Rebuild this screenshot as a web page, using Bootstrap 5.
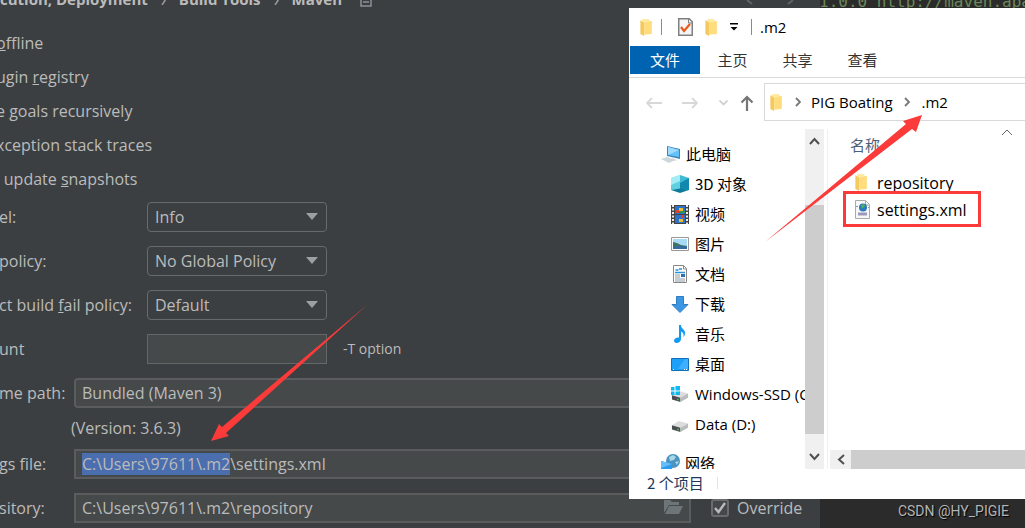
<!DOCTYPE html>
<html lang="zh-CN">
<head>
<meta charset="utf-8">
<meta name="viewport" content="width=device-width, initial-scale=1">
<title>Maven settings</title>
<link href="https://cdn.jsdelivr.net/npm/bootstrap@5.3.0/dist/css/bootstrap.min.css" rel="stylesheet">
<style>
body{background:#3c3f41;color:#bbb;font:16px/20px "Open Sans","Noto Sans CJK SC",sans-serif;overflow:hidden}
.ide{min-height:100vh}
.prefs{width:80%;flex:none}
.crumbs{height:26px;font-weight:700;font-size:15px}
.crumbs ol{margin-top:-11px;height:20px}
.crumbs svg{margin:0 13px}
.crumbs .reset-ico{margin:0 0 0 18px}
.crumbs .hist-ico{margin:0 26px 0 auto}
.opt{line-height:34px;text-indent:-4px}
.opt.cut{text-indent:-8px}
.fields{padding-top:6px}
.line{height:30px;margin-bottom:14px}
.cap-a,.cap-b{width:147px;text-indent:-1px;flex:none;white-space:nowrap}
.cap-b{width:74px}
.box,.box:focus{height:30px;background-color:#45494a;border:2px solid #5a5c5e;border-radius:0;color:#bbb;font-size:16px;line-height:20px;padding:0 6px;box-shadow:none}
.box.thin{border:1px solid #646668;width:180px}
.pick,.pick:focus{height:30px;width:180px;background-color:#3c3f41;border:1px solid #686a6c;border-radius:4px;color:#bbb;font-size:16px;line-height:20px;padding:0 30px 0 7px;box-shadow:none;
background-image:url("data:image/svg+xml,%3Csvg xmlns='http://www.w3.org/2000/svg' viewBox='0 0 12 8'%3E%3Cpath fill='%239da0a3' d='M0 0h12L6 7z'/%3E%3C/svg%3E");background-size:12px 8px;background-position:right 8px center}
.box::selection{background:#4b6eaf;color:#bbb}
.ver{height:41px;line-height:40px;padding-left:71px}
.side{width:129px;flex:none}
.open-ico{right:8px;top:6px}
.tick,.tick:checked{width:18px;height:18px;margin:0;border:2px solid #6b6b6b;border-radius:3px;background-color:#43494a;
background-size:16px 16px;background-image:url("data:image/svg+xml,%3Csvg xmlns='http://www.w3.org/2000/svg' viewBox='0 0 16 16'%3E%3Cpath fill='none' stroke='%23bbb' stroke-width='2.4' d='M3 8l3.5 4L13 3'/%3E%3C/svg%3E")}
.editor{background:#2b2b2b;overflow:hidden;min-width:0}
.code{margin:-9px 0 0 -1px;font:16px/22px "DejaVu Sans Mono",monospace;color:#6a8759}
.mark-text{font:14px/18px Roboto,sans-serif;color:#b4b4b4;padding:0 16px 8px 0;text-shadow:1px 1px 1px #000}
.explorer{left:629px;right:0;top:8px;background:#fff;color:#000;font-size:15px;overflow:hidden;font-family:"Open Sans","Noto Sans CJK SC",sans-serif}
.zh{font-family:"Noto Sans CJK SC",sans-serif}
.title{height:38px;padding-left:11px}
.title .doc{margin-right:12px}
.vline{width:1px;height:16px;background:#8a8a8a}
.tabs{height:32px;border-bottom:1px solid #dadada;margin-bottom:5px;padding-left:1px}
.tabs button{height:28px;border:0;background:none;color:#333;padding:0;width:65px;line-height:28px}
.tabs .on{width:70px;background:#0063b1;color:#fff}
.addr{height:46px}
.addr .hist{width:135px;height:38px;padding:2px 10px 0 17px;flex:none}
.addr button,.bar button{border:0;background:none;padding:0;line-height:0}
.path{height:38px;border:1px solid #d9d9d9;border-right:0;padding-left:5px}
.path a{color:#000}
.path .sep-a{margin:0 10px 0 12px}
.path .sep-b{margin:0 9px 0 8px}
.panes{height:340px}
.tree{width:176px;flex:none;overflow:hidden;padding-top:10px}
.tree li{height:30px;padding-left:42px;gap:6px;white-space:nowrap}
.tree .root{padding-left:32px;gap:5px}
.tree .net{margin-top:9px}
.tree svg{flex:none}
.bar{background:#f0f0f0}
.vbar{width:19px;padding:3px 0;flex:none}
.vbar .thumb{height:229px;background:#cdcdcd;margin-top:55px}
.vbar button{height:18px}
.list{border-left:1px solid #f0f0f0;margin-left:3px;min-width:0}
.head{height:40px;padding:6px 0 0 22px;color:#4c607a}
.head svg{margin:-6px 8px 0 0}
.files{font-size:16px}
.files li{height:27px;padding-left:27px;gap:7px}
.hbar{height:19px;margin-left:2px}
.hbar .thumb{background:#cdcdcd}
.hbar button{width:21px}
.status{height:30px;padding:0 0 3px 18px;color:#1e395b}
.status span{margin-left:13px;width:1px;height:12px;background:#e4e4e4}
.notes{left:0;top:0;pointer-events:none}
</style>
</head>
<body>
<svg width="0" height="0" class="position-absolute" aria-hidden="true"><defs>
<symbol id="folder" viewBox="0 0 13 18"><path fill="#ffe9a3" d="M2 0h7l1 2h2v14l-8 1-2-1z"/><path fill="#ffdc7c" d="M4 4l8-2v14H5z"/><path fill="#f4c95e" d="M0 1l4 3v14l-4-2z"/></symbol>
<symbol id="disk" viewBox="0 0 19 13"><path fill="#dcdcdc" d="M0 5l8-5 11 3-9 5z"/><path fill="#4a4d50" d="M0 5l10 3v5L0 10z"/><path fill="#b9bbbd" d="M10 8l9-5v5l-9 5z"/><path fill="#39c84d" d="M6 9l2 .6v1.6L6 10.600z"/></symbol>
</defs></svg>
<div class="ide d-flex position-relative">
  <main class="prefs">
    <nav class="crumbs d-flex" aria-label="breadcrumb">
      <ol class="list-unstyled d-flex align-items-center mb-0">
        <li>cution, Deployment</li>
        <li><svg width="5" height="9" viewBox="0 0 5 9"><path d="M1 0l3 4.500L1 9" fill="none" stroke="#9a9a9a" stroke-width="1.500"/></svg>Build Tools</li>
        <li><svg width="5" height="9" viewBox="0 0 5 9"><path d="M1 0l3 4.500L1 9" fill="none" stroke="#9a9a9a" stroke-width="1.500"/></svg>Maven</li>
        <li><svg class="reset-ico" width="12" height="12" viewBox="0 0 12 12"><path d="M1 0v11h10V0M3 7h6M3 4h6" fill="none" stroke="#8a9299" stroke-width="1.500"/></svg></li>
      </ol>
      <svg class="hist-ico" width="48" height="6" viewBox="0 0 48 6"><path d="M1 0l5 4M47 0l-5 4" fill="none" stroke="#606365" stroke-width="2"/></svg>
    </nav>
    <div class="opt"><u>o</u>ffline</div>
    <div class="opt">ugin <u>r</u>egistry</div>
    <div class="opt">e <u>g</u>oals recursively</div>
    <div class="opt">xception stack traces</div>
    <div class="opt cut">s update <u>s</u>napshots</div>
    <form class="fields">
      <div class="line d-flex align-items-center"><label class="cap-a" for="lvl">el:</label><select id="lvl" class="form-select pick"><option>Info</option></select></div>
      <div class="line d-flex align-items-center"><label class="cap-a" for="chk">policy:</label><select id="chk" class="form-select pick"><option>No Global Policy</option></select></div>
      <div class="line d-flex align-items-center"><label class="cap-a" for="fail">ct build <u>f</u>ail policy:</label><select id="fail" class="form-select pick"><option>Default</option></select></div>
      <div class="line d-flex align-items-center"><label class="cap-a" for="thr">unt</label><input id="thr" type="text" class="form-control box thin"><small class="ms-3">-T option</small></div>
      <div class="line mb-0 d-flex align-items-center"><label class="cap-b" for="home">me path:</label><input id="home" type="text" class="form-control box rounded-1" value="Bundled (Maven 3)"><span class="side"></span></div>
      <div class="ver">(Version: 3.6.3)</div>
      <div class="line d-flex align-items-center"><label class="cap-b" for="cfg">gs file:</label><input id="cfg" type="text" class="form-control box" value="C:\Users\97611\.m2\settings.xml"><span class="side"></span></div>
      <div class="line d-flex align-items-center mb-0"><label class="cap-b" for="repo">sitory:</label>
        <div class="flex-grow-1 position-relative"><input id="repo" type="text" class="form-control box" value="C:\Users\97611\.m2\repository"><svg class="open-ico position-absolute" width="19" height="16" viewBox="0 0 19 16"><path fill="#6e7579" d="M0 14V1h6l2 2h7v3H5zM1 15l4-8h14l-4 8z"/></svg></div>
        <div class="side d-flex align-items-center gap-2 ps-3"><input id="ovr" type="checkbox" class="form-check-input tick ms-1" checked><label for="ovr">Override</label></div></div>
    </form>
  </main>
  <aside class="editor flex-grow-1 d-flex flex-column justify-content-between">
    <pre class="code overflow-hidden">1.0.0 http://maven.apa</pre>
    <div class="mark-text text-end">CSDN @HY_PIGIE</div>
  </aside>

  <section class="explorer position-absolute">
    <header class="title d-flex align-items-center">
      <svg width="13" height="17"><use href="#folder"/></svg>
      <span class="vline ms-2 me-3"></span>
      <svg class="doc" width="15" height="18" viewBox="0 0 15 18"><path fill="#f5f5f5" stroke="#808080" stroke-width="1.500" d="M.75.75h10.500l3 3v13.500H.75z"/><path fill="none" stroke="#808080" d="M10.500 1v4H14"/><path fill="none" stroke="#e8591c" stroke-width="2.200" d="M3 9l3 4 6-7"/></svg>
      <svg width="13" height="17"><use href="#folder"/></svg>
      <svg class="ms-2" width="17" height="8" viewBox="0 0 17 8"><path fill="#000" d="M4 0h8v1.500H4zM4.500 4h7L8 7.500z"/></svg>
      <span class="vline ms-2 me-2"></span><span>.m2</span>
    </header>
    <nav class="tabs d-flex zh"><button class="on">文件</button><button>主页</button><button>共享</button><button>查看</button></nav>
    <div class="addr d-flex">
      <div class="hist d-flex align-items-center justify-content-between">
        <button aria-label="Back"><svg width="16" height="12" viewBox="0 0 16 12"><path d="M16 6H1.500M6 1L1 6l5 5" fill="none" stroke="#d8d8d8" stroke-width="1.800"/></svg></button>
        <button aria-label="Forward" class="ms-2"><svg width="16" height="12" viewBox="0 0 16 12"><path d="M0 6h14.500M10 1l5 5-5 5" fill="none" stroke="#d8d8d8" stroke-width="1.800"/></svg></button>
        <button aria-label="Recent" class="ms-2"><svg width="9" height="6" viewBox="0 0 9 6"><path d="M.5.5l4 4 4-4" fill="none" stroke="#d0d0d0" stroke-width="1.800"/></svg></button>
        <button aria-label="Up"><svg width="14" height="16" viewBox="0 0 14 16"><path d="M7 16V2M1.500 7.500L7 2l5.500 5.500" fill="none" stroke="#757575" stroke-width="2.200"/></svg></button>
      </div>
      <div class="path d-flex align-items-center flex-grow-1">
        <svg width="13" height="17"><use href="#folder"/></svg>
        <svg class="sep-a" width="6" height="10" viewBox="0 0 6 10"><path d="M1 1l4 4-4 4" fill="none" stroke="#777" stroke-width="1.800"/></svg>
        <a class="text-decoration-none" href="#">PIG Boating</a>
        <svg class="sep-b" width="12" height="10" viewBox="0 0 12 10"><path d="M4 1l4 4-4 4" fill="none" stroke="#777" stroke-width="1.800"/></svg>
        <a class="text-decoration-none" href="#">.m2</a>
      </div>
    </div>
    <div class="panes d-flex">
      <ul class="tree list-unstyled mb-0">
        <li class="root d-flex align-items-center zh"><svg width="20" height="18" viewBox="0 0 20 18"><path fill="#3b87bd" d="M6 1l13 3v10L6 11z"/><path fill="#64c2fa" d="M7 2l11 3v7L7 10z"/><path fill="#9edcff" d="M7 2l11 3-11 5z"/><path fill="#cfd6da" d="M0 14l6-2 8 3-6 3zM11 13l5 2-3 1-4-1z"/></svg>此电脑</li>
        <li class="d-flex align-items-center zh"><svg width="18" height="18" viewBox="0 0 18 18"><path fill="#62cfde" d="M0 3l9-3v14.500L0 15z"/><path fill="#a5edf4" d="M0 3l9-3v6L0 10z"/><path fill="#3fb9d6" d="M9 0l9 3v12l-9-.5z"/><path fill="#1189ae" d="M18 3v12l-9-1V8z"/><path fill="#0d7c9c" d="M0 15l9-1.500 9 1.500-9 3z"/></svg>3D 对象</li>
        <li class="d-flex align-items-center zh"><svg width="18" height="19" viewBox="0 0 18 19"><path fill="#444" d="M0 0h18v19H0z"/><path stroke="#eee" stroke-width="2" stroke-dasharray="2 1.500" d="M2 0v19M16 0v19"/><path fill="#2b73c9" d="M4 1h10v8H4zM4 10h10v8H4z"/><path fill="#f0bd2e" d="M8 3h4v3H8zM8 14h4v3H8z"/><path fill="#da4330" d="M5 5h3v3H5zM10 10h3v3h-3z"/><path fill="#35944a" d="M9 6h5v2H9z"/></svg>视频</li>
        <li class="d-flex align-items-center zh"><svg width="18" height="14" viewBox="0 0 18 14"><path fill="#fff" stroke="#999" d="M.5.5h17v13H.5z"/><path fill="#a9dbf7" d="M2 2h14v10H2z"/><path fill="#3d7463" d="M2 5l4 1 4 2 6 1v1H2z"/><path fill="#37699b" d="M2 9h14v3H2z"/></svg>图片</li>
        <li class="d-flex align-items-center zh"><svg width="18" height="18" viewBox="0 0 18 18"><path fill="#fff" stroke="#888" d="M2.500.5h10l3 3v14h-13z"/><path fill="none" stroke="#888" d="M12.500 1v3H15"/><path stroke="#2b91d8" stroke-width="1.500" d="M8 4h3M4 7.500h10M4.500 5h3"/><path stroke="#8a9aa8" d="M4 10h5M4 12h5M4 14h10M4 16h10"/><path fill="#2b70b0" d="M10 9h4v3h-4z"/></svg>文档</li>
        <li class="d-flex align-items-center zh"><svg width="18" height="17" viewBox="0 0 18 17"><path fill="#3b97e3" stroke="#2d7cc2" d="M5.500.5h7v8h4.500l-8 8-8-8h4.500z"/></svg>下载</li>
        <li class="d-flex align-items-center zh"><svg width="18" height="18" viewBox="0 0 18 18"><path fill="#109af2" d="M8 0h2c0 4 4 4 4 8 0 2-.6 3-1.500 4 .5-3-.5-5-2.500-5.500V14c0 2-2 4-4.500 4C4 18 3 17 3 15.500 3 13.500 5.500 12 8 12.500z"/></svg>音乐</li>
        <li class="d-flex align-items-center zh"><svg width="18" height="13" viewBox="0 0 18 13"><path fill="#1e9ffa" stroke="#1470b5" d="M.5.5h17v12H.5z"/><path fill="#3fb0ff" d="M7 11L14 1h3v10z"/><path stroke="#fff" stroke-dasharray="1 1" d="M2 11.500h2M13 11.500h3"/></svg>桌面</li>
        <li class="d-flex align-items-center"><svg width="18" height="16" viewBox="0 0 18 16"><use href="#disk" y="5" width="18" height="11"/><path fill="#10b9f0" d="M0 1h3.500v3.500H0zM4.500 0H9v4.500H4.500zM0 5.500h3.500V9H0zM4.500 5.500H9V9H4.500z"/></svg>Windows-SSD (C:)</li>
        <li class="d-flex align-items-center"><svg width="18" height="16" viewBox="0 0 18 16"><use href="#disk" y="5" width="18" height="11"/></svg>Data (D:)</li>
        <li class="root net d-flex align-items-center zh"><svg width="19" height="18" viewBox="0 0 19 18"><circle cx="12" cy="7" r="7" fill="#4b94bf"/><path fill="#a8d6e8" d="M8 3l4-2 3 2-2 3-4 1zM14 8l4-1-2 4z"/><path fill="#2a9df0" d="M0 7l11 3v8L0 15z"/><path fill="#68bdf8" d="M0 7l11 3-11 4z"/></svg>网络</li>
      </ul>
      <div class="bar vbar d-flex flex-column align-items-center">
        <button aria-label="Scroll up"><svg width="11" height="8" viewBox="0 0 11 8"><path d="M1 7l4.500-5L10 7" fill="none" stroke="#505050" stroke-width="2"/></svg></button>
        <div class="thumb w-100"></div>
        <button class="mt-auto" aria-label="Scroll down"><svg width="11" height="8" viewBox="0 0 11 8"><path d="M1 1l4.500 5L10 1" fill="none" stroke="#505050" stroke-width="2"/></svg></button>
      </div>
      <div class="list flex-grow-1 d-flex flex-column">
        <div class="head zh d-flex justify-content-between">名称<svg width="20" height="9" viewBox="0 0 20 9"><path d="M5 6l5-5 5 5" fill="none" stroke="#666"/></svg></div>
        <ul class="files list-unstyled mb-0">
          <li class="d-flex align-items-center"><svg width="15" height="17"><use href="#folder" width="13" height="17"/></svg>repository</li>
          <li class="d-flex align-items-center"><svg width="15" height="19" viewBox="0 0 15 19"><path fill="#f7f7f9" stroke="#aaa" d="M.5.5h10l4 4v14H.5z"/><path fill="none" stroke="#aaa" d="M10.500 1v4H14"/><circle cx="8" cy="7.500" r="4" fill="#2878c4"/><path fill="#53b04d" d="M6 5l3-1 1 2-3 3z"/><path stroke="#89a" d="M1 6.500h2M13 7.500h1"/><path fill="#9a9aba" d="M3 12.500h9v3H3z"/></svg>settings.xml</li>
        </ul>
        <div class="bar hbar d-flex mt-auto"><button aria-label="Scroll left"><svg width="8" height="11" viewBox="0 0 8 11"><path d="M7 1L2 5.500 7 10" fill="none" stroke="#505050" stroke-width="2"/></svg></button><div class="thumb flex-grow-1"></div></div>
      </div>
    </div>
    <footer class="status zh d-flex align-items-center">2 个项目<span></span></footer>
  </section>

  <svg class="notes position-absolute" width="1025" height="528" viewBox="0 0 1025 528" aria-hidden="true">
    <g fill="#fb3a3a"><path d="M367 305L222 427l-3-3-8 17 18-5-3-3z"/><path d="M765 242L906 124l-3-3 19-6-6 17-4-3z"/></g>
    <path fill="none" stroke="#fb3a3a" stroke-width="3" d="M844.500 192.500h135v33h-135z"/>
  </svg>
</div>
<script src="https://cdn.jsdelivr.net/npm/bootstrap@5.3.0/dist/js/bootstrap.bundle.min.js"></script>
<script>
const cfg = document.getElementById('cfg');
cfg.focus();
cfg.setSelectionRange(0, 'C:\\Users\\97611\\.m2'.length);
</script>
</body>
</html>
